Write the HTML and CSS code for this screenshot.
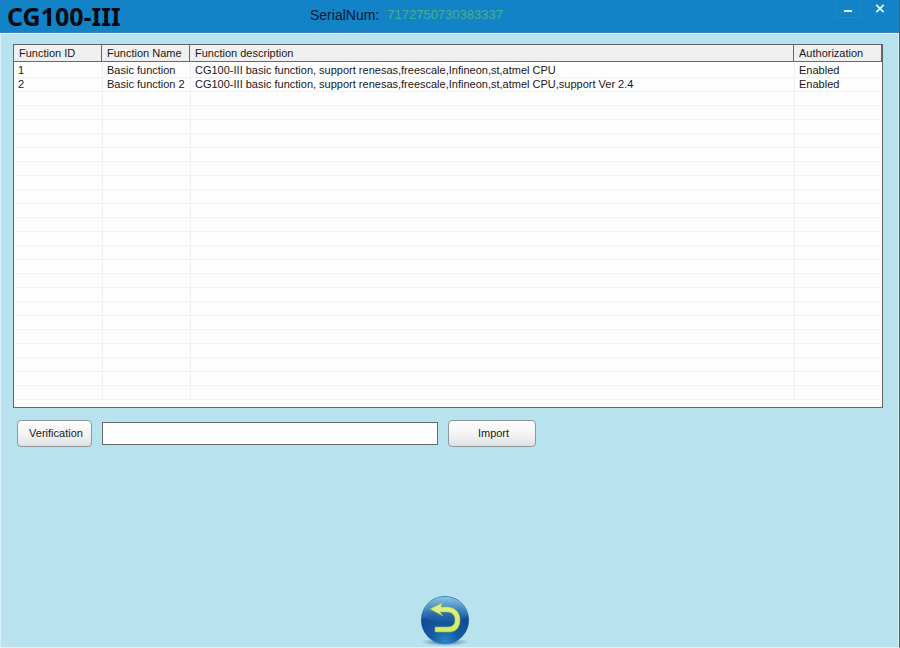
FILE: index.html
```html
<!DOCTYPE html>
<html lang="en">
<head>
<meta charset="utf-8">
<title>CG100-III</title>
<link rel="stylesheet" href="styles.css">
</head>
<body>
<header class="titlebar">
  <h1 class="brand">CG100-III</h1>
  <p class="serial"><span class="serial-label">SerialNum:</span><span class="serial-value">7172750730383337</span></p>
  <div class="window-controls">
    <button class="window-button minimize" type="button" aria-label="Minimize"><svg width="12" height="12" viewBox="0 0 12 12"><path d="M2 8H10" stroke="#e4f6fc" stroke-width="2"/></svg></button>
    <button class="window-button" type="button" aria-label="Close"><svg width="12" height="12" viewBox="0 0 12 12"><path d="M2.3 1.8L9.7 9.2M9.7 1.8L2.3 9.2" stroke="#e4f6fc" stroke-width="1.8"/></svg></button>
  </div>
</header>
<main class="content">
  <div class="grid-frame">
    <table class="functions">
      <colgroup><col class="narrow"><col class="narrow"><col><col class="narrow"></colgroup>
      <thead>
        <tr><th>Function ID</th><th>Function Name</th><th>Function description</th><th>Authorization</th></tr>
      </thead>
      <tbody>
        <tr><td>1</td><td>Basic function</td><td>CG100-III basic function, support renesas,freescale,Infineon,st,atmel CPU</td><td>Enabled</td></tr>
        <tr><td>2</td><td>Basic function 2</td><td>CG100-III basic function, support renesas,freescale,Infineon,st,atmel CPU,support Ver 2.4</td><td>Enabled</td></tr>
        <tr><td></td><td></td><td></td><td></td></tr>
        <tr><td></td><td></td><td></td><td></td></tr>
        <tr><td></td><td></td><td></td><td></td></tr>
        <tr><td></td><td></td><td></td><td></td></tr>
        <tr><td></td><td></td><td></td><td></td></tr>
        <tr><td></td><td></td><td></td><td></td></tr>
        <tr><td></td><td></td><td></td><td></td></tr>
        <tr><td></td><td></td><td></td><td></td></tr>
        <tr><td></td><td></td><td></td><td></td></tr>
        <tr><td></td><td></td><td></td><td></td></tr>
        <tr><td></td><td></td><td></td><td></td></tr>
        <tr><td></td><td></td><td></td><td></td></tr>
        <tr><td></td><td></td><td></td><td></td></tr>
        <tr><td></td><td></td><td></td><td></td></tr>
        <tr><td></td><td></td><td></td><td></td></tr>
        <tr><td></td><td></td><td></td><td></td></tr>
        <tr><td></td><td></td><td></td><td></td></tr>
        <tr><td></td><td></td><td></td><td></td></tr>
        <tr><td></td><td></td><td></td><td></td></tr>
        <tr><td></td><td></td><td></td><td></td></tr>
        <tr><td></td><td></td><td></td><td></td></tr>
        <tr><td></td><td></td><td></td><td></td></tr>
      </tbody>
    </table>
  </div>
  <form class="actions">
    <button class="button verify" type="button">Verification</button>
    <input class="code" type="text" aria-label="Verification code">
    <button class="button import" type="button">Import</button>
  </form>
</main>
<footer class="footer">
  <button class="back" type="button" aria-label="Back">
    <svg width="52" height="52" viewBox="0 0 52 52">
      <defs>
        <radialGradient id="ball" cx="0.5" cy="0.95" r="0.95">
          <stop offset="0" stop-color="#2a86c6"/><stop offset="0.3" stop-color="#155ba4"/><stop offset="0.65" stop-color="#114b92"/><stop offset="1" stop-color="#2f7cba"/>
        </radialGradient>
        <linearGradient id="gloss" x1="0" y1="0" x2="0" y2="1">
          <stop offset="0" stop-color="#a5d8f0" stop-opacity="0.8"/><stop offset="1" stop-color="#4c9bd0" stop-opacity="0.1"/>
        </linearGradient>
        <linearGradient id="arrow" x1="0" y1="0" x2="0" y2="1">
          <stop offset="0" stop-color="#e2f283"/><stop offset="1" stop-color="#d3ec62"/>
        </linearGradient>
        <radialGradient id="shadow"><stop offset="0" stop-color="#174d78" stop-opacity="0.8"/><stop offset="1" stop-color="#174d78" stop-opacity="0"/></radialGradient>
      </defs>
      <ellipse cx="26" cy="48" rx="24" ry="4" fill="url(#shadow)"/>
      <circle cx="26" cy="26" r="24" fill="url(#ball)"/>
      <path d="M3 23C4 10 14 3 26 3C38 3 48 11 49 21C40 30 17 29 3 23Z" fill="url(#gloss)"/>
      <path d="M11 15L23 9L22 13H29C38 14 41 20 41 26C41 33 37 38 31 38H16V33H29C34 33 36 30 36 26C36 21 33 18 28 18H21L24 22Z" fill="url(#arrow)" stroke="#9fbd4a" stroke-width="0.6" stroke-linejoin="round"/>
    </svg>
  </button>
</footer>
</body>
</html>
```
FILE: styles.css
```css
* {
  box-sizing: border-box;
}

body {
  margin: 0;
  min-height: 100vh;
  display: flex;
  flex-direction: column;
  background: #b8e3ee;
  border-right: 1px solid #52616b;
  border-bottom: 1px solid #dff3f8;
  box-shadow: inset 1px 0 #d5f0f7, inset -1px 0 #d5f0f7;
  color: #1c1620;
  font: 11px/14px "Liberation Sans", Arial, sans-serif;
}

.titlebar {
  display: grid;
  grid-template-columns: 300px 1fr auto;
  height: 34px;
  padding-left: 7px;
  background: #1283c6;
  border-bottom: 1px solid #d5f0f7;
  box-shadow: inset 0 -1px #3f83ad;
}

.brand {
  margin: 0;
  color: #050a12;
  font: bold 25px/32px "Noto Sans", sans-serif;
}

.serial {
  display: flex;
  align-items: center;
  gap: 8px;
  height: 30px;
  margin: 0;
  padding-left: 3px;
}

.serial-label {
  color: #06182c;
  font-size: 14px;
}

.serial-value {
  color: #45b08f;
  font-size: 13px;
}

.window-controls {
  display: flex;
  gap: 6px;
  height: 18px;
  padding-right: 6px;
}

.window-button {
  display: grid;
  place-items: center;
  width: 26px;
  padding: 0;
  border: 0;
  background: none;
}

.minimize {
  border: 1px solid #1f8acb;
  border-width: 0 1px 1px;
}

.content {
  flex: 1;
  padding: 10px 16px 0 13px;
}

.grid-frame {
  padding-bottom: 7px;
  border: 1px solid #5f6669;
  background: #fefefe;
}

.functions {
  width: 100%;
  table-layout: fixed;
  border-collapse: separate;
  border-spacing: 0;
}

.narrow {
  width: 88px;
}

.functions th {
  height: 17px;
  padding: 0 5px;
  border-right: 1px solid #66686a;
  border-bottom: 1px solid #66686a;
  background: #f0f0f0;
  font-weight: normal;
  text-align: left;
  white-space: nowrap;
}

.functions td {
  height: 14px;
  padding: 0 0 0 4px;
  border-left: 1px solid #f1f1f1;
  border-bottom: 1px solid #f3f3f3;
  line-height: 13px;
  vertical-align: bottom;
  white-space: nowrap;
}

.functions td:first-child {
  border-left: 0;
}

.functions tbody tr:first-child td {
  height: 16px;
}

.actions {
  display: flex;
  align-items: center;
  gap: 10px;
  margin: 0;
  padding: 12px 4px;
}

.button {
  height: 27px;
  padding: 0 0 2px 3px;
  border: 1px solid #8d989e;
  border-radius: 4px;
  background: linear-gradient(#fdfdfd, #f4f4f5 50%, #dfe1e3);
  color: inherit;
  font: inherit;
}

.verify {
  width: 75px;
}

.import {
  width: 88px;
}

.code {
  width: 336px;
  height: 23px;
  padding: 2px 4px;
  border: 1px solid #626a6e;
  background: #fefefe;
  font: inherit;
}

.footer {
  display: flex;
  justify-content: center;
  padding: 0 9px 1px 0;
}

.back {
  display: block;
  padding: 0;
  border: 0;
  background: none;
}

.back svg {
  display: block;
}
```
